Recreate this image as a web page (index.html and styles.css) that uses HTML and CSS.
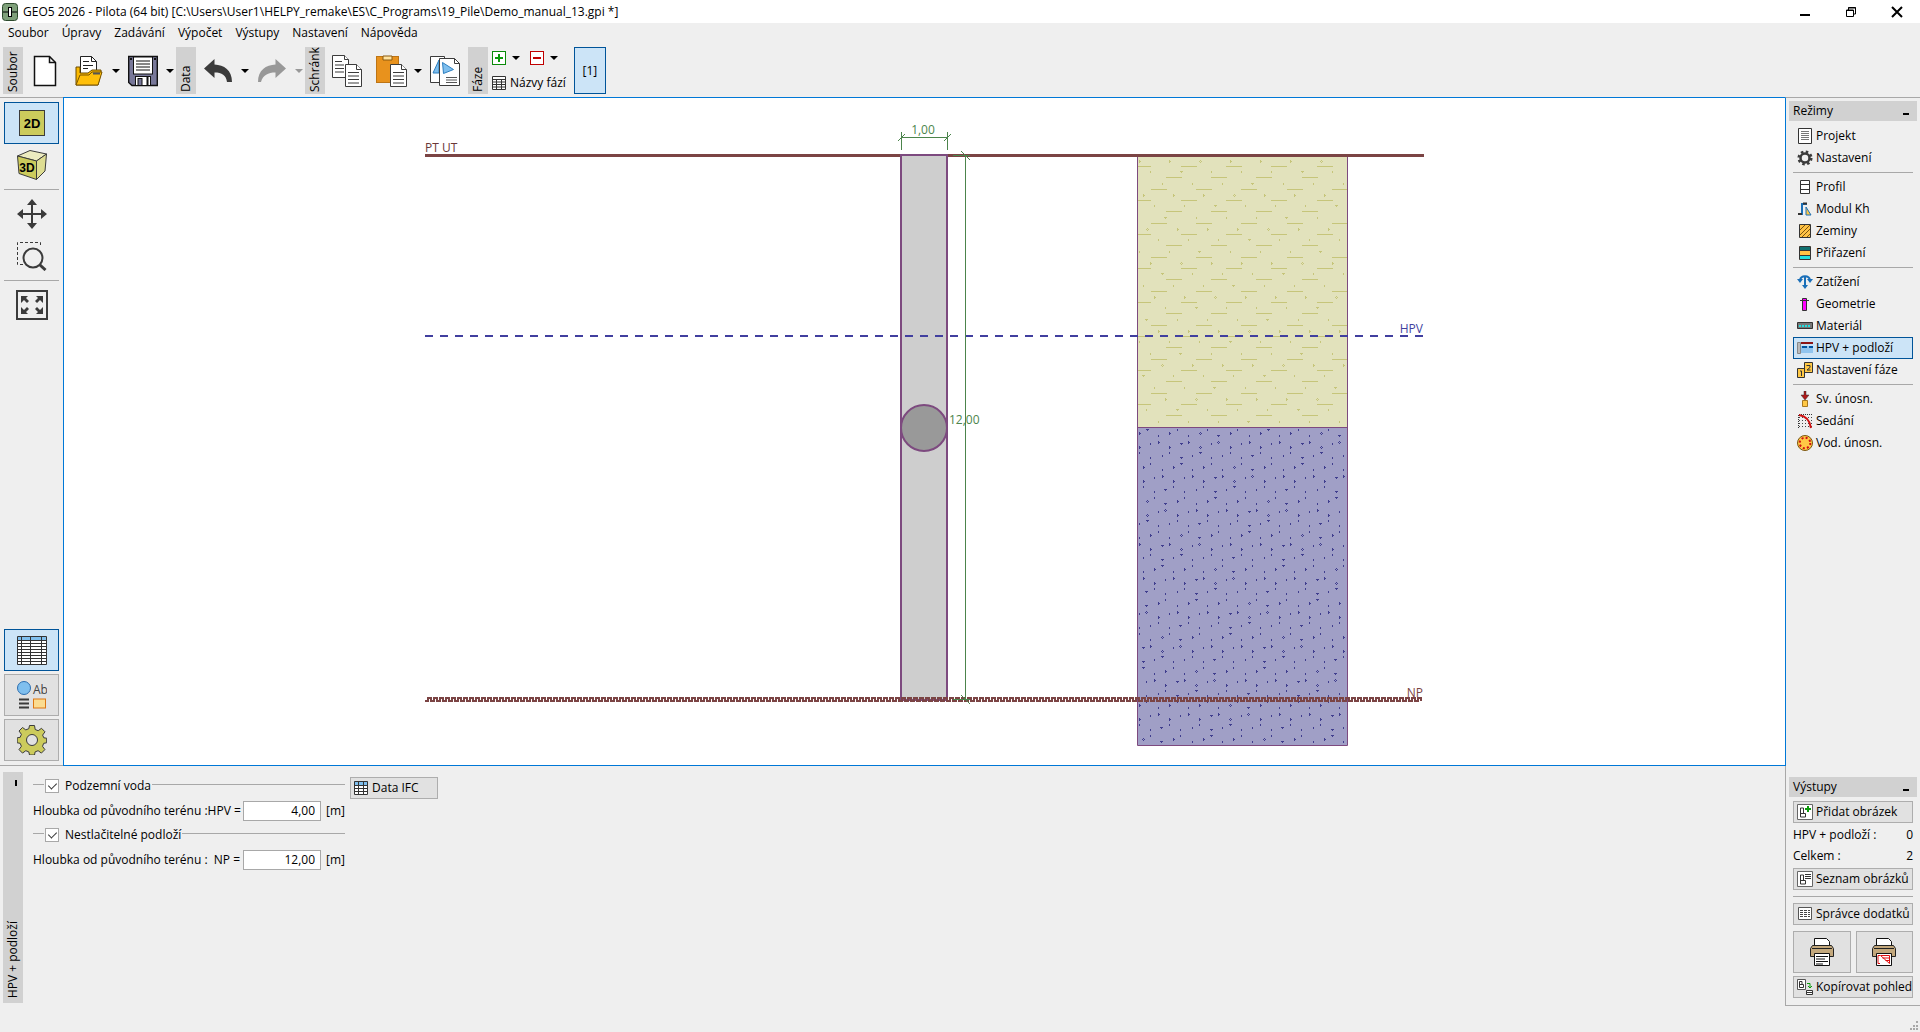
FILE: index.html
```
<!DOCTYPE html>
<html lang="cs">
<head>
    <meta charset="UTF-8">
    <meta name="viewport" content="width=device-width, initial-scale=1.0">
    <link rel="stylesheet" href="styles.css">
    <title>GEO5 2026 - Pilota</title>
</head>
<body>

<header class="titlebar">
    <svg width="16" height="18" viewBox="0 0 16 18"><rect x=".5" y=".5" width="15" height="17" rx="3" fill="#7fa07a" stroke="#2c4a2c"/><path d="M1 9h14" stroke="#000"/><rect x="6.500" y="4.500" width="3" height="9" fill="#fff" stroke="#000"/></svg>
    <h1>GEO5 2026 - Pilota (64 bit) [C:\Users\User1\HELPY_remake\ES\C_Programs\19_Pile\Demo_manual_13.gpi *]</h1>
    <div class="window-buttons">
        <button aria-label="Minimalizovat"><svg width="12" height="12"><path d="M1 9h10" stroke="#000" stroke-width="2"/></svg></button>
        <button aria-label="Obnovit"><svg width="12" height="12" fill="none" stroke="#000"><path d="M1.500 4h7v6.500h-7zM3.500 4V1.500h7V8h-2M1 4.500h8M3 2h8"/></svg></button>
        <button aria-label="Zavřít"><svg width="12" height="12"><path d="M1 1l10 10M11 1L1 11" stroke="#000" stroke-width="2"/></svg></button>
    </div>
</header>

<nav class="menu">
    <button>Soubor</button>
    <button>Úpravy</button>
    <button>Zadávání</button>
    <button>Výpočet</button>
    <button>Výstupy</button>
    <button>Nastavení</button>
    <button>Nápověda</button>
</nav>

<div class="toolbar">
    <div class="tab">Soubor</div>
    <button class="tool" aria-label="Nový"><svg width="24" height="32" viewBox="0 0 24 32"><path d="M1.500 1.500h15l6 6v23h-21z" fill="#fff" stroke="#111" stroke-width="1.500"/><path d="M16.500 1.500v6h6" fill="none" stroke="#111" stroke-width="1.500"/></svg></button>
    <button class="tool" aria-label="Otevřít"><svg width="28" height="32" viewBox="0 0 28 32"><path d="M5.500 20V1.500h11l5 5V18" fill="#fff" stroke="#222"/><path d="M16.500 1.500v5h5M8 6.500h6M8 10.500h10M8 13.500h5" fill="none" stroke="#222"/><path d="M1 30V12h4v6h8l4-3h9v3l-3 12z" fill="#fbb900" stroke="#6b4a00"/><path d="M1 30l4-10h9l3-3h10l-4 13z" fill="#ffbf0a" stroke="#7a5500"/><path d="M18 18.500h7" stroke="#555" stroke-width="2"/></svg></button>
    <button class="arrow" aria-label="Otevřít další"><svg width="8" height="4"><path d="M0 0h8L4 4z"/></svg></button>
    <button class="tool" aria-label="Uložit"><svg width="30" height="32" viewBox="0 0 30 32"><path d="M.7 1.500h28.600v29H4l-3.300-3z" fill="#787899" stroke="#111" stroke-width="1.400"/><rect x="5.500" y="2" width="19" height="17" fill="#fff" stroke="#111"/><path d="M8 6h14M8 9h14M8 12h14M8 15h14" stroke="#111"/><rect x="7.500" y="21.500" width="15" height="9" fill="#fff" stroke="#111"/><rect x="10" y="23.500" width="4" height="7" fill="#787899" stroke="#111"/><path d="M19.500 22v8" stroke="#111" stroke-width="2"/><path d="M2 4h2M26 4h2" stroke="#111" stroke-width="2"/></svg></button>
    <button class="arrow" aria-label="Uložit další"><svg width="8" height="4"><path d="M0 0h8L4 4z"/></svg></button>
    <div class="tab">Data</div>
    <button class="tool" aria-label="Zpět"><svg width="28" height="24" viewBox="0 0 28 24"><path d="M0 9.500L10.500 0v5.500C20 6 28 11 28 23h-5c-1-7-5-9.500-12.500-9.500V19z" fill="#3b3b3b"/></svg></button>
    <button class="arrow" aria-label="Seznam zpět"><svg width="8" height="4"><path d="M0 0h8L4 4z"/></svg></button>
    <button class="tool" aria-label="Vpřed" disabled><svg width="28" height="24" viewBox="0 0 28 24"><path d="M28 9.500L17.500 0v5.500C8 6 0 11 0 23h3c2-7 7-9.500 14.500-9.500V19z" fill="#989898"/></svg></button>
    <button class="arrow" aria-label="Seznam vpřed" disabled><svg width="8" height="4"><path d="M0 0h8L4 4z" fill="#989898"/></svg></button>
    <div class="tab">Schránk</div>
    <button class="tool" aria-label="Kopírovat"><svg width="30" height="32" viewBox="0 0 30 32"><g fill="#fff" stroke="#3b3b3b"><path d="M.5.500h12l4 4v18H.500z"/><path d="M12.500.500v4h4M3 6.500h7M3 10h9M3 13.500h9M3 17h9"/><path d="M13.500 9.500h11l5 5v17h-16z"/><path d="M24.500 9.500v5h5M16 17.500h11M16 21h11M16 24.500h11M16 28h11"/></g></svg></button>
    <button class="tool" aria-label="Vložit"><svg width="31" height="32" viewBox="0 0 31 32"><rect x=".5" y="1.500" width="22" height="26" fill="#e8921d" stroke="#bd7414"/><path d="M7 1h9v4H7z" fill="#ffe3a0" stroke="#8b5a10"/><g fill="#fff" stroke="#3b3b3b"><path d="M14.500 9.500h11l5 5v17h-16z"/><path d="M25.500 9.500v5h5M17 17.500h11M17 21h11M17 24.500h11M17 28h11"/></g></svg></button>
    <button class="arrow" aria-label="Vložit další"><svg width="8" height="4"><path d="M0 0h8L4 4z"/></svg></button>
    <button class="tool" aria-label="Kopírovat obrázek"><svg width="30" height="32" viewBox="0 0 30 32"><path d="M.5 1.500h14v26H.500z" fill="#fff" stroke="#3b3b3b"/><path d="M3 18L9 5v13z" fill="#7fbfee" stroke="#2d7fc0"/><path d="M9.500 3.500h15l5 5v22h-20z" fill="#fff" stroke="#3b3b3b"/><path d="M24.500 3.500v5h5" fill="none" stroke="#3b3b3b"/><path d="M12.500 7.500l11 7-10 4z" fill="#7fbfee" stroke="#2d7fc0"/><path d="M16 22.500h11M16 25h11M16 27.500h11" stroke="#555"/></svg></button>
    <div class="tab">Fáze</div>
    <div class="phases">
        <div class="phase-row">
            <button aria-label="Přidat fázi"><svg width="14" height="14"><rect x=".5" y=".5" width="13" height="13" fill="#fff" stroke="#0a8a0a"/><path d="M7 3v8M3 7h8" stroke="#0a9a0a" stroke-width="2"/></svg></button>
            <button aria-label="Přidat fázi další"><svg width="8" height="4"><path d="M0 0h8L4 4z"/></svg></button>
            <button class="remove" aria-label="Odebrat fázi"><svg width="14" height="14"><rect x=".5" y=".5" width="13" height="13" fill="#fff" stroke="#c00000"/><path d="M3 7h8" stroke="#c00000" stroke-width="2"/></svg></button>
            <button aria-label="Odebrat fázi další"><svg width="8" height="4"><path d="M0 0h8L4 4z"/></svg></button>
        </div>
        <button class="phase-names"><svg width="14" height="14"><path d="M.5.500h13v13H.500zM.500 3.500h13M.500 6h13M.500 8.500h13M.500 11h13M4.500 3v11M9.500 3v11" fill="#fff" stroke="#333"/></svg>Názvy fází</button>
    </div>
    <button class="phase active">[1]</button>
</div>

<main class="main">
    <div class="rail">
        <button class="rail-btn active" aria-label="2D"><svg width="26" height="26"><rect x=".5" y=".5" width="25" height="25" fill="#cccb5c" stroke="#3b3b3b"/><text x="13" y="18" text-anchor="middle" class="icon-text">2D</text></svg></button>
        <button class="rail-btn flat" aria-label="3D"><svg width="30" height="30" viewBox="0 0 30 30" stroke="#3b3b3b" stroke-linejoin="round"><path d="M.5 6L13 .5l16.500 3.500-10 7z" fill="#ecebc0"/><path d="M.5 6l19 5v18.500L2 23.500z" fill="#cccb5c"/><path d="M19.500 11l10-7-1.500 17-8.500 8.500z" fill="#dedd92"/><text x="10" y="22" text-anchor="middle" stroke="none" class="icon-text small">3D</text></svg></button>
        <hr>
        <button class="rail-btn flat" aria-label="Posun"><svg width="30" height="30" viewBox="0 0 30 30" fill="#3b3b3b"><path d="M15 0l5 6h-4v8h8v-4l6 5-6 5v-4h-8v8h4l-5 6-5-6h4v-8H6v4l-6-5 6-5v4h8V6h-4z"/></svg></button>
        <button class="rail-btn flat" aria-label="Zvětšit oblast"><svg width="30" height="30" viewBox="0 0 30 30" fill="none" stroke="#3b3b3b"><path d="M6 23.500H.500V1.500h23V6" stroke-dasharray="3 2"/><circle cx="16" cy="17" r="9.500" stroke-width="2"/><path d="M22.500 23.500l6 5.500" stroke-width="3"/></svg></button>
        <hr>
        <button class="rail-btn flat" aria-label="Zobrazit vše"><svg width="32" height="30" viewBox="0 0 32 30" fill="#3b3b3b"><path d="M1 1h30v28H1z" fill="none" stroke="#3b3b3b" stroke-width="2"/><path d="M5 6h7l-2 2 3 3-2 2-3-3-3 3zM27 6h-7l2 2-3 3 2 2 3-3 3 3zM5 24h7l-2-2 3-3-2-2-3 3-3-3zM27 24h-7l2-2-3-3 2-2 3 3 3-3z"/></svg></button>
        <div class="rail-bottom">
            <button class="rail-btn active" aria-label="Tabulka"><svg width="30" height="29" viewBox="0 0 30 29"><path d="M.5.500h29v28H.500z" fill="#fff"/><path d="M1 1h28v3H1z" fill="#7fbfee"/><path d="M.5.500h29v28H.500zM0 4.500h30M0 7.500h30M0 10.500h30M0 13.500h30M0 16.500h30M0 19.500h30M0 22.500h30M0 25.500h30M4.500 0v29M13.500 0v29M24.500 0v29" fill="none" stroke="#333"/></svg></button>
            <button class="rail-btn" aria-label="Nastavení kreslení"><svg width="30" height="28" viewBox="0 0 30 28"><circle cx="7" cy="7" r="6.500" fill="#7fbfee" stroke="#2d6fb0"/><text x="16" y="13" class="ab-text">Ab</text><path d="M2 18.500h10M2 22.500h10M2 26.500h10" stroke="#3b3b3b" stroke-width="2"/><rect x="16.500" y="18" width="12" height="9" fill="#fbdc90" stroke="#dd7712"/></svg></button>
            <button class="rail-btn" aria-label="Nastavení"><svg width="30" height="30" viewBox="-15 -15 30 30" stroke="#3b3b3b"><path d="M-2.500-14.500h5l.7 4 3 1.200 3.300-2.400 3.500 3.500-2.400 3.300 1.200 2.700 2.900.4v4.600l-3 .5-1.200 3 2.400 3.300-3.500 3.500-3.300-2.400-3 1.200-.6 3.100h-5l-.7-3.100-3-1.200-3.300 2.400-3.500-3.500 2.400-3.300-1.200-3-3-.5v-5l3-.5 1.200-3-2.400-3.300 3.500-3.500 3.300 2.400 3-1.200z" fill="#cccb5c"/><circle r="5.500" fill="#e1e1e1"/></svg></button>
        </div>
    </div>

    <div class="canvas">
        <svg class="drawing" viewBox="64 98 1721 667">
            <rect x="1137" y="156" width="211" height="271" fill="#e2e2bc"/>
            <rect x="1137" y="427" width="211" height="318" fill="#a09fc6"/>
            <path id="clay-lines" fill="#c6c57a"/>
            <path id="clay-dots" fill="#c6c57a"/>
            <path id="sand-dots" fill="#403e8e"/>
            <path d="M1137.500 156v589.500h210V156M1137 427.500h211" fill="none" stroke="#7d4a7f"/>

            <path d="M425 155.500h999" stroke="#7b4444" stroke-width="3"/>
            <rect x="901" y="155" width="46" height="545" fill="#cecece" stroke="#7d4a7f" stroke-width="2"/>
            <circle cx="924" cy="428" r="23" fill="#999" stroke="#7d4a7f" stroke-width="2"/>
            <path d="M425 336h999" stroke="#413f9f" stroke-width="2" stroke-dasharray="8 7"/>
            <path id="bedrock" fill="none" stroke="#7b4444" stroke-width="2"/>

            <g fill="none" stroke="#4c844c">
                <path d="M901.500 132v18M947.500 132v18M901 137.500h46M898 141l7-7M944 141l7-7"/>
                <path d="M965.500 155v545M953 155.500h17M961 151l9 9M953 699.500h17M961 695l9 9"/>
            </g>
            <g class="dimension">
                <text x="923" y="134" text-anchor="middle">1,00</text>
                <text x="949" y="424">12,00</text>
            </g>
            <text x="425" y="152" fill="#6a3838">PT UT</text>
            <text x="1423" y="333" text-anchor="end" fill="#413f9f">HPV</text>
            <text x="1423" y="697" text-anchor="end" fill="#7b4444">NP</text>
        </svg>
    </div>

    <aside class="modes">
        <h2>Režimy<span class="collapse"></span></h2>
        <div class="panel-body">
            <button class="mode"><svg width="16" height="16"><path d="M1.500.500h13v15h-13z" fill="#fff" stroke="#333"/><path d="M4 3.500h8M4 5.500h8M4 7.500h8M4 9.500h8M4 11.500h8" stroke="#777"/></svg>Projekt</button>
            <button class="mode"><svg width="16" height="16" viewBox="-8 -8 16 16" fill="none" stroke="#3b3b3b"><circle r="4.500" stroke-width="2.500"/><circle r="6.300" stroke-width="2.500" stroke-dasharray="2.500 2.450"/></svg>Nastavení</button>
            <hr>
            <button class="mode"><svg width="16" height="16"><path d="M3.500 1.500h9v13h-9zM3 5.500h10M3 10.500h10" fill="#fff" stroke="#333"/></svg>Profil</button>
            <button class="mode"><svg width="16" height="16"><path d="M1 13h4V3h5" fill="none" stroke="#1a6fb8" stroke-width="2"/><path d="M1 13h4M6 2.500h4" stroke="#333" stroke-width="2"/><path d="M9 6v8h5z" fill="#ffc845" stroke="#1a6fb8"/></svg>Modul Kh</button>
            <button class="mode"><svg width="16" height="16"><path d="M2.500 1.500h11v13h-11z" fill="#ffc245" stroke="#333"/><path d="M3 7l5-5M3 12l10-10M5 14l8-8M10 14l3-3" stroke="#7a5510"/></svg>Zeminy</button>
            <button class="mode"><svg width="16" height="16"><path d="M2.500 1.500h11v13h-11z" fill="#ffc245" stroke="#333"/><path d="M3 2h10v3H3z" fill="#107070"/><path d="M3 11h10v3H3z" fill="#20e0e0"/><path d="M3 5.500h10M3 10.500h10" stroke="#333"/></svg>Přiřazení</button>
            <hr>
            <button class="mode"><svg width="16" height="16" fill="none" stroke="#1a6fb8" stroke-width="2"><path d="M3 6c1-5 9-5 10 0M8 3v10"/><path d="M0 5h6L3 9zM10 5h6l-3 4zM5 11h6l-3 4z" fill="#1a6fb8" stroke="none"/></svg>Zatížení</button>
            <button class="mode"><svg width="16" height="16"><path d="M5.500 2.500h4v12h-4z" fill="#f0f" stroke="#333"/><path d="M3 4.500h9" stroke="#333"/></svg>Geometrie</button>
            <button class="mode"><svg width="16" height="16"><path d="M.5 4.500h15v6H.500z" fill="#777" stroke="#333"/><path d="M2 8h12" stroke="#20e0e0" stroke-width="2" stroke-dasharray="2 1"/></svg>Materiál</button>
            <button class="mode active"><svg width="16" height="16"><path d="M4 3h12v10H4z" fill="#90c4ee"/><path d="M.5 2.500h3v11h-3z" fill="#bbb" stroke="#888"/><path d="M4 3h12" stroke="#8c1515" stroke-width="2"/><path d="M4 5h12" stroke="#fff"/><path d="M5 7h11" stroke="#0054a0" stroke-width="2" stroke-dasharray="5 2"/></svg>HPV + podloží</button>
            <button class="mode"><svg width="16" height="16"><path d="M.5 6.500h7v9h-7zM7.500.500h8v10h-8z" fill="#ffc845" stroke="#333"/><path d="M3 9h1.500v5M9.500 3.500H13v2l-3 2.500h3.500" fill="none" stroke="#333"/></svg>Nastavení fáze</button>
            <hr>
            <button class="mode"><svg width="16" height="16"><path d="M7 0h2v4h3L8 9 4 4h3z" fill="#b01818" stroke="#333" stroke-width=".5"/><path d="M5.500 9.500h5v6h-5z" fill="#ffc845" stroke="#a87820"/></svg>Sv. únosn.</button>
            <button class="mode"><svg width="16" height="16"><path d="M2 4.500h14M2 7.500h14M2 10.500h14M2 13.500h14" stroke="#444" stroke-dasharray="1 2"/><path d="M1.500 15V1.500H16" fill="none" stroke="#333" stroke-dasharray="1 1"/><path d="M2 2c7 1 11 6 12 13" fill="none" stroke="#d01010" stroke-width="2"/></svg>Sedání</button>
            <button class="mode"><svg width="16" height="16"><circle cx="8" cy="8" r="7.500" fill="#ffc845" stroke="#7a5510"/><circle cx="8" cy="8" r="5.300" fill="none" stroke="#d01010" stroke-width="2" stroke-dasharray="2 2.160"/></svg>Vod. únosn.</button>
        </div>
    </aside>

    <section class="bottom">
        <div class="side-tab"><span class="collapse"></span><span class="side-title">HPV + podloží</span></div>
        <form class="form">
            <div class="group">
                <input type="checkbox" id="water" checked><label for="water">Podzemní voda</label>
            </div>
            <div class="field">
                <label for="hpv"><span>Hloubka od původního terénu :</span><span>HPV =</span></label>
                <input type="text" id="hpv" value="4,00"><span class="unit">[m]</span>
            </div>
            <div class="group">
                <input type="checkbox" id="base" checked><label for="base">Nestlačitelné podloží</label>
            </div>
            <div class="field">
                <label for="np"><span>Hloubka od původního terénu :</span><span>NP =</span></label>
                <input type="text" id="np" value="12,00"><span class="unit">[m]</span>
            </div>
        </form>
        <button class="btn ifc"><svg width="14" height="14"><path d="M0 0h14v14H0z" fill="#fff"/><path d="M0 0h14v4H0z" fill="#7fbfee"/><path d="M.5.500h13v13H.500zM0 4.500h14M0 7.500h14M0 10.500h14M4.500 0v14M9.500 0v14" fill="none" stroke="#333"/></svg>Data IFC</button>
    </section>

    <aside class="outputs">
        <h2>Výstupy<span class="collapse"></span></h2>
        <div class="panel-body">
            <button class="btn"><svg width="16" height="16"><path d="M.5.500h15v15H.500z" fill="#fff" stroke="#666"/><path d="M3.500 4v9h5V9.500h-5M3.500 4h3v5" fill="none" stroke="#333"/><path d="M11 2v6M8 5h6" stroke="#0a9a0a" stroke-width="2"/></svg>Přidat obrázek</button>
            <p>HPV + podloží :<span>0</span></p>
            <p>Celkem :<span>2</span></p>
            <button class="btn"><svg width="16" height="16"><path d="M.5.500h15v15H.500z" fill="#fff" stroke="#666"/><path d="M3.500 4v9h5V9.500h-5M3.500 4h3v5M8 3.500h6M8 5.500h6M8 7.500h6" fill="none" stroke="#333"/></svg>Seznam obrázků</button>
            <hr>
            <button class="btn"><svg width="16" height="16"><path d="M1.500 1.500h13v12h-13z" fill="#fff" stroke="#555"/><path d="M3 4.500h10M3 6.500h10M3 8.500h10M3 10.500h10" stroke="#444" stroke-dasharray="3 1"/></svg>Správce dodatků</button>
            <div class="printers">
                <button class="btn" aria-label="Tisk"><svg width="24" height="30" viewBox="0 0 24 30"><path d="M4.500 9V1.500h12l3 3V9" fill="#fff" stroke="#111"/><path d="M2.500 8.500h19l2 3v8H.500v-8z" fill="#c3a87c" stroke="#222"/><path d="M2 11.500h20" stroke="#222"/><path d="M4.500 16.500h15v12h-15z" fill="#fff" stroke="#111"/><path d="M6 19.500h12M6 22h9M6 24.500h12M6 27h7" stroke="#111"/></svg></button>
                <button class="btn" aria-label="Tisk obrázku"><svg width="24" height="30" viewBox="0 0 24 30"><path d="M4.500 9V1.500h12l3 3V9" fill="#fff" stroke="#111"/><path d="M2.500 8.500h19l2 3v8H.500v-8z" fill="#c3a87c" stroke="#222"/><path d="M2 11.500h20" stroke="#222"/><path d="M4.500 16.500h15v12h-15z" fill="#fff" stroke="#111"/><path d="M8 18.500H6v8h2M8.500 18.500h9v8zM10.500 21h7M13.500 23.500h4" fill="none" stroke="#e01010"/></svg></button>
            </div>
            <button class="btn"><svg width="16" height="16"><path d="M.5.500h8v10h-8z" fill="#fff" stroke="#555"/><path d="M2.500 2.500v6h4V5.500h-4M2.500 2.500h2.500v3" fill="none" stroke="#333"/><path d="M10 4.500h3v4M11 7l2 2 2-2" fill="none" stroke="#0a9a0a"/><path d="M9.500 11.500h6v4h-6zM9 13.500h7" fill="#fff" stroke="#333"/></svg>Kopírovat pohled</button>
        </div>
    </aside>
</main>

<footer class="statusbar">
    <svg width="10" height="10" fill="#a8a8a8"><path d="M7 0h2v2H7zM4 4h2v2H4zM7 4h2v2H7zM1 7h2v2H1zM4 7h2v2H4zM7 7h2v2H7z"/></svg>
</footer>

<script>
    // Short horizontal strokes of the upper soil
    let lines = '';
    for (let row = 0; row < 24; row++) {
        const y = Math.round(166 + row * 34 / 3);
        if (y > 425) break;
        for (let i = -1; i < 5; i++) {
            const start = Math.floor(1181 + i * 136 / 3 - (row % 3) * 15);
            const from = Math.max(start, 1138);
            const to = Math.min(start + 16, 1347);
            if (to > from) lines += `M${from} ${y}h${to - from}v1h${from - to}z`;
        }
    }
    document.getElementById('clay-lines').setAttribute('d', lines);

    // Small grains laid on a skewed grid
    function dot(x, y) {
        return `M${x} ${y}h1v1h-1z`;
    }

    function grains(top, tallRow, minY, maxY) {
        let d = '';
        for (let k = -3; k < 36; k++) {
            const y = Math.round(top + k * 34 / 3);
            if (y < minY || y > maxY) continue;
            const tall = (k + 3) % 3 === tallRow;
            for (let j = -16; j < 8; j++) {
                const pos = 1139.5 + j * 30.25 + k * 34 / 3;
                const x = Math.floor(pos);
                if (x < 1138 || x > 1345) continue;
                const frac = pos - x;
                const wide = frac < 0.12 || frac > 0.87;
                if (tall && wide) d += dot(x, y - 1) + dot(x - 1, y) + dot(x + 1, y) + dot(x, y + 1);
                else if (tall) d += `M${x} ${y - 1}h1v3h-1z` + dot(x + 1, y);
                else if (wide) d += `M${x - 1} ${y - 1}h3v1h-3z` + dot(x, y);
                else d += `M${x} ${y - 1}h1v2h-1z`;
            }
        }
        return d;
    }

    document.getElementById('clay-dots').setAttribute('d', grains(161, 0, 158, 425));
    document.getElementById('sand-dots').setAttribute('d',
        grains(433, 0, 429, 743) + grains(447, 0, 429, 743) + grains(453, 2, 429, 743));

    // Toothed line of the incompressible subsoil
    let teeth = 'M425 701';
    for (let x = 425; x < 1420; x += 6) teeth += 'h3v-3h3v3';
    document.getElementById('bedrock').setAttribute('d', teeth);
</script>

</body>
</html>
```

FILE: styles.css
```
* {
    box-sizing: border-box;
}

body {
    margin: 0;
    height: 100vh;
    display: flex;
    flex-direction: column;
    background: #efefef;
    color: #000;
    font-family: 'Open Sans', 'Noto Sans', sans-serif;
    font-size: 12px;
    line-height: 16px;
    overflow: hidden;
}

button {
    font: inherit;
    color: inherit;
    padding: 0;
    border: 0;
    background: none;
}

svg {
    display: block;
    flex: none;
}

hr {
    width: 100%;
    height: 1px;
    margin: 3px 0;
    border: 0;
    background: #a8a8a8;
}

/* Title and menu */
.titlebar {
    height: 23px;
    display: flex;
    align-items: center;
    gap: 5px;
    padding-left: 2px;
    background: #fff;
}

.titlebar h1 {
    flex: 1;
    margin: 0;
    font-size: 12px;
    font-weight: normal;
}

.window-buttons {
    display: flex;
}

.window-buttons button {
    width: 46px;
    height: 23px;
    display: flex;
    align-items: center;
    justify-content: center;
}

.menu {
    height: 20px;
    display: flex;
    align-items: center;
    gap: 13px;
    padding-left: 8px;
}

/* Toolbar */
.toolbar {
    height: 54px;
    display: flex;
    align-items: flex-start;
    padding: 4px 3px;
}

.tab {
    width: 20px;
    height: 47px;
    margin-left: 1px;
    padding-top: 2px;
    background: #d1d1d1;
    line-height: 20px;
    writing-mode: vertical-rl;
    transform: rotate(180deg);
    white-space: nowrap;
}

.tab:first-child {
    margin-left: 0;
}

.tool,
.arrow {
    width: 44px;
    height: 47px;
    display: flex;
    align-items: center;
    justify-content: center;
}

.arrow {
    width: 10px;
}

.phases {
    padding: 4px 0 0 4px;
}

.phase-row {
    display: flex;
    align-items: center;
    gap: 6px;
}

.phase-row .remove {
    margin-left: 4px;
}

.phase-names {
    display: flex;
    align-items: center;
    gap: 4px;
    margin-top: 10px;
}

.phase {
    width: 32px;
    height: 47px;
    margin-left: 8px;
}

.active {
    background: #cce4f7;
    border: 1px solid #005499;
}

/* Main area */
.main {
    flex: 1;
    min-height: 0;
    display: grid;
    grid-template-columns: 63px 1fr 135px;
    grid-template-rows: 1fr auto;
}

.rail {
    display: flex;
    flex-direction: column;
    padding: 4px;
    border-top: 1px solid #a8a8a8;
    border-bottom: 1px solid #a8a8a8;
}

.rail-btn {
    width: 55px;
    height: 42px;
    display: flex;
    align-items: center;
    justify-content: center;
    flex: none;
    border: 1px solid #adadad;
    background: #e1e1e1;
}

.rail-btn.active {
    border-color: #005499;
    background: #cce4f7;
}

.rail-btn.flat {
    border-color: transparent;
    background: none;
}

.rail-bottom {
    display: flex;
    flex-direction: column;
    gap: 3px;
    margin-top: auto;
}

.icon-text {
    font-family: 'Liberation Sans', Arial, sans-serif;
    font-size: 13px;
    font-weight: bold;
}

.icon-text.small {
    font-size: 12px;
}

.ab-text {
    font-size: 12px;
    fill: #444;
}

.canvas {
    min-width: 0;
    min-height: 0;
    border: 1px solid #0078d7;
    border-right: 0;
    background: #fff;
}

.drawing {
    width: 100%;
    height: 100%;
    font-size: 12px;
}

.dimension {
    fill: #4c844c;
}

/* Right panels */
.modes {
    padding: 3px 3px 0;
    border-left: 1px solid #0078d7;
    border-top: 1px solid #a8a8a8;
}

.outputs {
    padding: 11px 3px 7px;
    border-left: 1px solid #a8a8a8;
    border-bottom: 1px solid #a8a8a8;
}

h2 {
    height: 20px;
    display: flex;
    justify-content: space-between;
    margin: 0;
    padding: 0 8px 0 4px;
    background: #d1d1d1;
    font-size: 12px;
    font-weight: normal;
    line-height: 20px;
}

.collapse {
    width: 6px;
    height: 2px;
    margin-top: 12px;
    background: #000;
}

.panel-body {
    display: flex;
    flex-direction: column;
    padding: 4px 4px 0;
}

.mode,
.btn {
    height: 22px;
    display: flex;
    align-items: center;
    gap: 3px;
    padding: 0 3px;
    border: 1px solid transparent;
    white-space: nowrap;
}

.mode.active {
    border-color: #005499;
}

.btn {
    border-color: #adadad;
    background: #e1e1e1;
}

.outputs p {
    display: flex;
    justify-content: space-between;
    margin: 0;
    line-height: 21px;
}

.outputs .btn + p {
    margin-top: 1px;
}

.outputs p + .btn {
    margin-top: 2px;
}

.outputs hr {
    margin: 6px 0;
}

.printers {
    display: flex;
    gap: 5px;
    margin: 6px 0 3px;
}

.printers .btn {
    flex: 1;
    height: 42px;
    justify-content: center;
}

/* Bottom panel */
.bottom {
    grid-column: 1 / 3;
    display: flex;
    align-items: flex-start;
    padding: 6px 3px 3px;
}

.side-tab {
    width: 20px;
    display: flex;
    flex-direction: column;
    justify-content: space-between;
    align-self: stretch;
    padding: 8px 0 5px;
    background: #d1d1d1;
}

.side-title {
    line-height: 20px;
    white-space: nowrap;
    writing-mode: vertical-rl;
    transform: rotate(180deg);
}

.side-tab .collapse {
    width: 2px;
    height: 6px;
    margin: 0 0 0 12px;
}

.form {
    width: 312px;
    margin-left: 10px;
}

.group {
    display: flex;
    align-items: center;
    height: 28px;
}

.group::before,
.group::after {
    content: '';
    height: 1px;
    margin-bottom: 4px;
    background: #a8a8a8;
}

.group::before {
    width: 11px;
}

.group::after {
    flex: 1;
}

.group input {
    width: 14px;
    height: 14px;
    margin: 0 6px 0 1px;
    appearance: none;
    border: 1px solid #a8a8a8;
    background: #fff;
}

.group input:checked::after {
    content: '';
    display: block;
    width: 4px;
    height: 7px;
    margin: 1px 0 0 4px;
    border: solid #333;
    border-width: 0 1px 1px 0;
    transform: rotate(45deg);
}

.group label {
    margin-right: 1px;
}

.field {
    display: flex;
    align-items: center;
    height: 21px;
}

.field label {
    width: 207px;
    display: flex;
    justify-content: space-between;
    white-space: nowrap;
}

.field input {
    width: 78px;
    height: 20px;
    margin: 0 5px 0 3px;
    padding: 0 5px;
    border: 1px solid #a8a8a8;
    background: #fff;
    font: inherit;
    text-align: right;
}

.ifc {
    width: 88px;
    margin: 5px 0 0 5px;
    gap: 4px;
}

.statusbar {
    height: 26px;
    display: flex;
    justify-content: flex-end;
    align-items: flex-end;
    padding: 1px;
}
```
